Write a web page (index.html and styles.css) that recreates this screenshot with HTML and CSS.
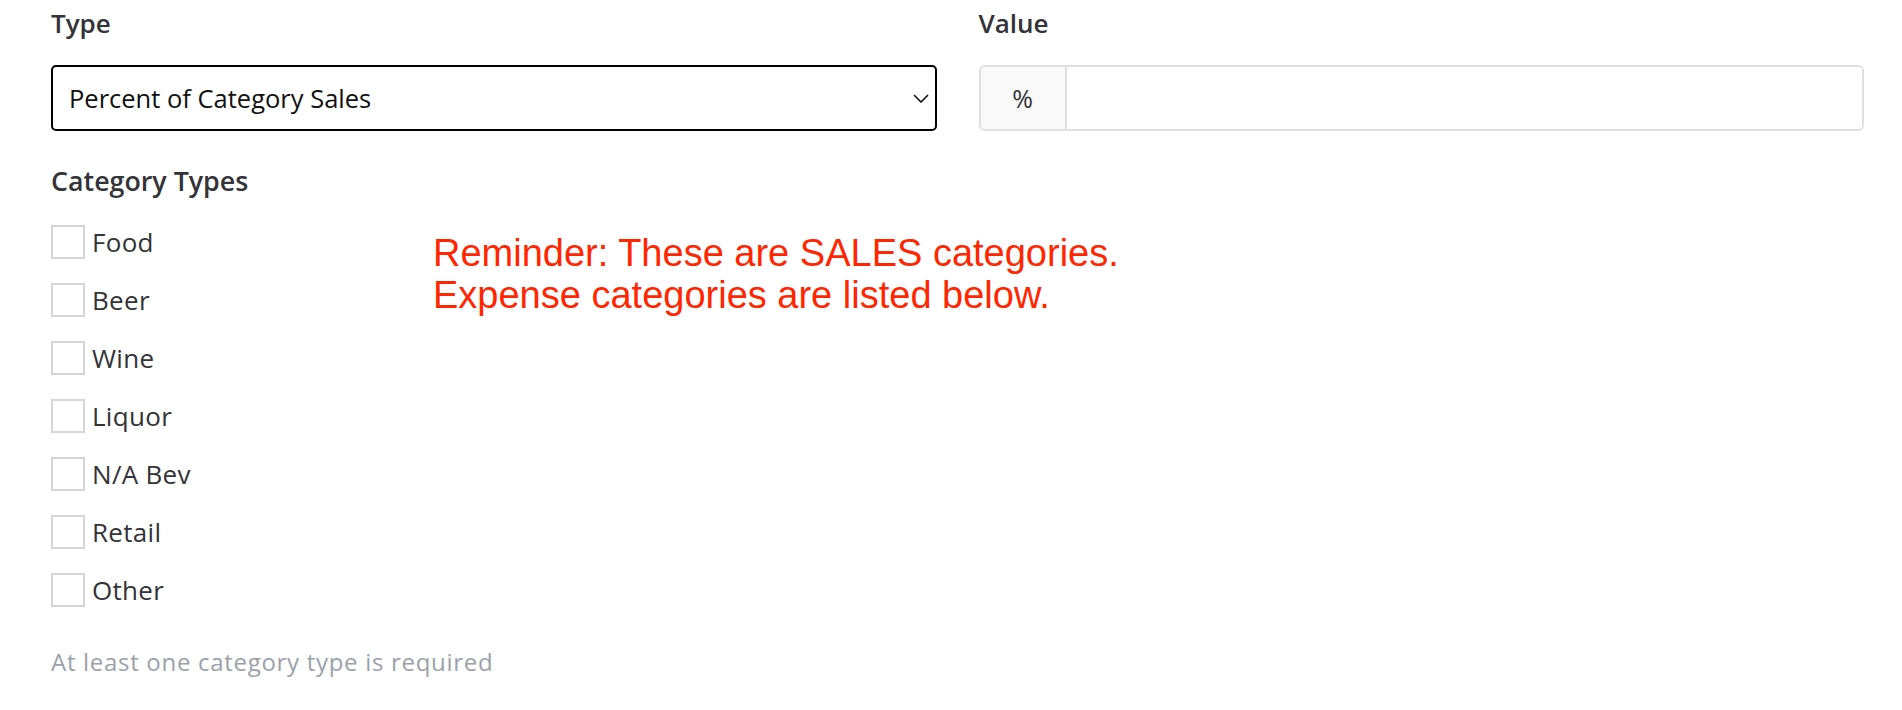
FILE: index.html
```html
<!DOCTYPE html>
<html lang="en">
<head>
<meta charset="utf-8">
<title>Category rule</title>
<link rel="stylesheet" href="styles.css">
</head>
<body>
<div class="page">
  <div class="row-top">
    <div class="field">
      <div class="field-label">Type</div>
      <div class="select">
        <span class="select-text">Percent of Category Sales</span>
        <svg class="chevron" width="16" height="9" viewBox="0 0 16 9"><polyline points="1,1 8,8 15,1" fill="none" stroke="#111" stroke-width="1.6"/></svg>
      </div>
    </div>
    <div class="field">
      <div class="field-label">Value</div>
      <div class="input-group">
        <div class="addon">%</div>
        <div class="input"></div>
      </div>
    </div>
  </div>

  <div class="field-label section-label">Category Types</div>
  <div class="cat-area">
    <div class="checks">
      <label class="check"><span class="box"></span><span class="check-text">Food</span></label>
      <label class="check"><span class="box"></span><span class="check-text">Beer</span></label>
      <label class="check"><span class="box"></span><span class="check-text">Wine</span></label>
      <label class="check"><span class="box"></span><span class="check-text">Liquor</span></label>
      <label class="check"><span class="box"></span><span class="check-text">N/A Bev</span></label>
      <label class="check"><span class="box"></span><span class="check-text">Retail</span></label>
      <label class="check"><span class="box"></span><span class="check-text">Other</span></label>
    </div>
    <div class="note">Reminder: These are SALES categories.<br>Expense categories are listed below.</div>
  </div>
  <div class="help">At least one category type is required</div>
</div>
</body>
</html>
```
FILE: styles.css
```css
html, body {
  margin: 0;
  padding: 0;
  background: #ffffff;
}
body {
  font-family: "Open Sans", Lato, sans-serif;
  color: #333338;
}
.page {
  padding: 3px 38px 0 51px;
}
.row-top {
  display: grid;
  grid-template-columns: 1fr 1fr;
  column-gap: 42px;
}
.field-label {
  font-size: 26px;
  line-height: 40px;
  font-weight: 600;
  color: #333338;
  margin-bottom: 22px;
}
.select {
  box-sizing: border-box;
  height: 66px;
  border: 2px solid #000;
  border-radius: 5px;
  display: flex;
  align-items: center;
  justify-content: space-between;
  padding: 0 6px 0 16px;
  font-size: 25.5px;
  color: #111;
}
.chevron {
  display: block;
}
.input-group {
  box-sizing: border-box;
  height: 66px;
  border: 2px solid #dfdfe4;
  border-radius: 6px;
  display: flex;
  overflow: hidden;
}
.addon {
  width: 86px;
  box-sizing: border-box;
  border-right: 2px solid #dfdfe4;
  background: #f9f9fa;
  display: flex;
  align-items: center;
  justify-content: center;
  font-size: 25px;
  color: #333338;
}
.input {
  flex: 1;
  background: #fff;
}
.section-label {
  font-size: 26.8px;
  margin-top: 30px;
  margin-bottom: 24px;
}
.cat-area {
  display: grid;
  grid-template-columns: 382px 1fr;
}
.checks {
  display: flex;
  flex-direction: column;
  gap: 24px;
}
.check {
  display: flex;
  align-items: center;
  gap: 7px;
  height: 34px;
}
.box {
  box-sizing: border-box;
  width: 34px;
  height: 34px;
  border: 2px solid #d6d6d6;
  background: #fff;
  flex: none;
}
.check-text {
  font-size: 26px;
  letter-spacing: 0.3px;
  color: #333338;
}
.note {
  margin-top: 6.5px;
  font-family: "Liberation Sans", Arial, sans-serif;
  font-size: 38px;
  line-height: 42.5px;
  color: #ff2600;
}
.help {
  margin-top: 39px;
  font-size: 24px;
  letter-spacing: 0.7px;
  line-height: 32px;
  color: #9ba1ab;
}
```
